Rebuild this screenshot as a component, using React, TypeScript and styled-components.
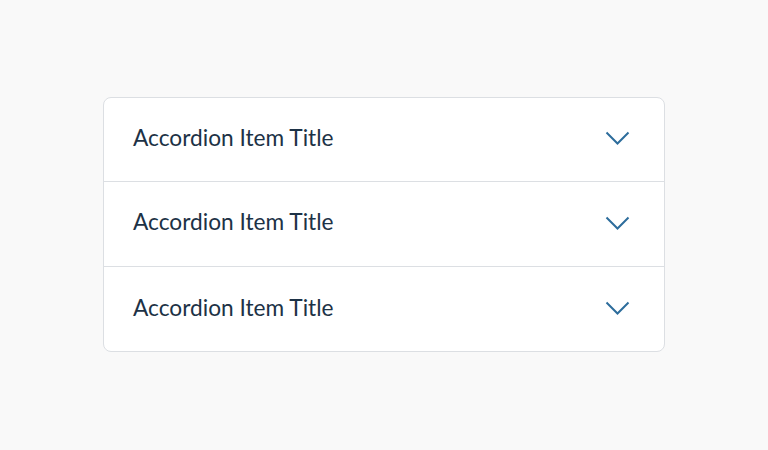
import React, { useState } from 'react';
import styled, { createGlobalStyle } from 'styled-components';

const GlobalStyle = createGlobalStyle`
  html, body {
    margin: 0;
    padding: 0;
    background: #f9f9f9;
  }
  body {
    font-family: Lato, 'Open Sans', sans-serif;
  }
`;

const Page = styled.div`
  width: 768px;
  height: 450px;
  display: flex;
  justify-content: center;
  padding-top: 97px;
  box-sizing: border-box;
`;

const Card = styled.div`
  width: 562px;
  height: 255px;
  box-sizing: border-box;
  background: #fff;
  border: 1px solid #dcdfe3;
  border-radius: 8px;
  overflow: hidden;
  display: flex;
  flex-direction: column;
`;

const Row = styled.button<{ last?: boolean }>`
  height: 85px;
  flex-shrink: 0;
  display: flex;
  align-items: center;
  justify-content: space-between;
  padding: 0 34px 0 29px;
  background: none;
  border: none;
  border-bottom: ${(props) => (props.last ? 'none' : '1px solid #dcdfe3')};
  font-family: inherit;
  cursor: pointer;
  text-align: left;

  &:first-child {
    height: 84px;
  }
`;

const Title = styled.span`
  font-size: 22.7px;
  color: #1d3246;
  margin-top: -5px;
`;

const Chevron = styled.svg<{ open?: boolean }>`
  width: 25px;
  height: 15px;
  margin-top: -2px;
  transform: ${(props) => (props.open ? 'rotate(180deg)' : 'none')};
`;

const App = () => {
  const [openIndex, setOpenIndex] = useState<number | null>(null);
  const items = ['Accordion Item Title', 'Accordion Item Title', 'Accordion Item Title'];

  return (
    <>
      <GlobalStyle />
      <Page>
        <Card>
          {items.map((title, index) => (
            <Row key={index} last={index === items.length - 1} onClick={() => setOpenIndex(openIndex === index ? null : index)}>
              <Title>{title}</Title>
              <Chevron open={openIndex === index} viewBox="0 0 25 15" fill="none">
                <path d="M1.5 1.5 L12.5 12.5 L23.5 1.5" stroke="#2d6d9c" strokeWidth="2" />
              </Chevron>
            </Row>
          ))}
        </Card>
      </Page>
    </>
  );
};

export default App;
